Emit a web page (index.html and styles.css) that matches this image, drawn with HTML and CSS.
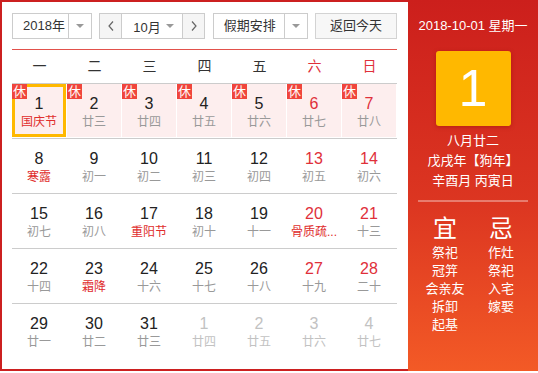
FILE: index.html
```html
<!DOCTYPE html>
<html lang="zh-CN">
<head>
<meta charset="utf-8">
<title>万年历</title>
<link rel="stylesheet" href="styles.css">
</head>
<body>
<div class="calendar">
  <div class="main">
    <div class="toolbar">
      <div class="select year">
        <span class="sel-text">2018年</span>
        <span class="sel-arrow"><i class="caret"></i></span>
      </div>
      <div class="month-group">
        <span class="nav"><svg width="6" height="10" viewBox="0 0 6 10"><polyline points="5,0.5 1,5 5,9.5" fill="none" stroke="#666" stroke-width="1.2"/></svg></span>
        <span class="month"><span>10月</span><i class="caret"></i></span>
        <span class="nav"><svg width="6" height="10" viewBox="0 0 6 10"><polyline points="1,0.5 5,5 1,9.5" fill="none" stroke="#666" stroke-width="1.2"/></svg></span>
      </div>
      <div class="select holiday">
        <span class="sel-text">假期安排</span>
        <span class="sel-arrow"><i class="caret"></i></span>
      </div>
      <div class="today-btn">返回今天</div>
    </div>

    <div class="weekdays">
      <span>一</span><span>二</span><span>三</span><span>四</span><span>五</span><span class="we">六</span><span class="we">日</span>
    </div>

    <div class="weeks">
      <div class="week">
        <div class="day rest current"><i class="badge">休</i><span class="num">1</span><span class="lunar fest">国庆节</span></div>
        <div class="day rest"><i class="badge">休</i><span class="num">2</span><span class="lunar">廿三</span></div>
        <div class="day rest"><i class="badge">休</i><span class="num">3</span><span class="lunar">廿四</span></div>
        <div class="day rest"><i class="badge">休</i><span class="num">4</span><span class="lunar">廿五</span></div>
        <div class="day rest"><i class="badge">休</i><span class="num">5</span><span class="lunar">廿六</span></div>
        <div class="day rest weekend"><i class="badge">休</i><span class="num">6</span><span class="lunar">廿七</span></div>
        <div class="day rest weekend"><i class="badge">休</i><span class="num">7</span><span class="lunar">廿八</span></div>
      </div>
      <div class="week">
        <div class="day"><span class="num">8</span><span class="lunar fest">寒露</span></div>
        <div class="day"><span class="num">9</span><span class="lunar">初一</span></div>
        <div class="day"><span class="num">10</span><span class="lunar">初二</span></div>
        <div class="day"><span class="num">11</span><span class="lunar">初三</span></div>
        <div class="day"><span class="num">12</span><span class="lunar">初四</span></div>
        <div class="day weekend"><span class="num">13</span><span class="lunar">初五</span></div>
        <div class="day weekend"><span class="num">14</span><span class="lunar">初六</span></div>
      </div>
      <div class="week">
        <div class="day"><span class="num">15</span><span class="lunar">初七</span></div>
        <div class="day"><span class="num">16</span><span class="lunar">初八</span></div>
        <div class="day"><span class="num">17</span><span class="lunar fest">重阳节</span></div>
        <div class="day"><span class="num">18</span><span class="lunar">初十</span></div>
        <div class="day"><span class="num">19</span><span class="lunar">十一</span></div>
        <div class="day weekend"><span class="num">20</span><span class="lunar fest">骨质疏...</span></div>
        <div class="day weekend"><span class="num">21</span><span class="lunar">十三</span></div>
      </div>
      <div class="week">
        <div class="day"><span class="num">22</span><span class="lunar">十四</span></div>
        <div class="day"><span class="num">23</span><span class="lunar fest">霜降</span></div>
        <div class="day"><span class="num">24</span><span class="lunar">十六</span></div>
        <div class="day"><span class="num">25</span><span class="lunar">十七</span></div>
        <div class="day"><span class="num">26</span><span class="lunar">十八</span></div>
        <div class="day weekend"><span class="num">27</span><span class="lunar">十九</span></div>
        <div class="day weekend"><span class="num">28</span><span class="lunar">二十</span></div>
      </div>
      <div class="week">
        <div class="day"><span class="num">29</span><span class="lunar">廿一</span></div>
        <div class="day"><span class="num">30</span><span class="lunar">廿二</span></div>
        <div class="day"><span class="num">31</span><span class="lunar">廿三</span></div>
        <div class="day other"><span class="num">1</span><span class="lunar">廿四</span></div>
        <div class="day other"><span class="num">2</span><span class="lunar">廿五</span></div>
        <div class="day other"><span class="num">3</span><span class="lunar">廿六</span></div>
        <div class="day other"><span class="num">4</span><span class="lunar">廿七</span></div>
      </div>
    </div>
  </div>

  <aside class="side">
    <div class="side-date">2018-10-01 星期一</div>
    <div class="big-day">1</div>
    <div class="lunar-info">
      <div>八月廿二</div>
      <div>戊戌年【狗年】</div>
      <div>辛酉月 丙寅日</div>
    </div>
    <div class="divider"></div>
    <div class="yiji">
      <div class="yiji-col">
        <div class="yiji-title">宜</div>
        <ul>
          <li>祭祀</li>
          <li>冠笄</li>
          <li>会亲友</li>
          <li>拆卸</li>
          <li>起基</li>
        </ul>
      </div>
      <div class="yiji-col">
        <div class="yiji-title">忌</div>
        <ul>
          <li>作灶</li>
          <li>祭祀</li>
          <li>入宅</li>
          <li>嫁娶</li>
        </ul>
      </div>
    </div>
  </aside>
</div>
</body>
</html>
```

FILE: styles.css
```css
* { box-sizing: border-box; }

html, body {
  margin: 0;
  padding: 0;
  background: #fff;
}

body {
  font-family: "Liberation Sans", "Noto Sans CJK SC", sans-serif;
  color: #333;
}

.calendar {
  display: flex;
  width: 538px;
  height: 371px;
}

.main {
  width: 408px;
  height: 371px;
  border: 2px solid #cc2020;
  border-right: 0;
  padding: 11px 11px 0 10px;
}

/* toolbar */
.toolbar {
  display: flex;
  justify-content: space-between;
  height: 26px;
  font-size: 13px;
}

.select {
  display: flex;
  height: 26px;
  border: 1px solid #ccc;
  background: #fff;
}

.sel-text {
  line-height: 24px;
  padding-left: 10px;
  white-space: nowrap;
}

.year { width: 80px; }
.year .sel-text { width: 55px; }

.holiday { width: 95px; }
.holiday .sel-text { width: 70px; }

.sel-arrow {
  width: 23px;
  border-left: 1px solid #ccc;
  display: flex;
  align-items: center;
  justify-content: center;
}

.caret {
  display: block;
  width: 0;
  height: 0;
  border-left: 4px solid transparent;
  border-right: 4px solid transparent;
  border-top: 4px solid #999;
}

.month-group {
  display: flex;
  width: 106px;
  height: 26px;
  border: 1px solid #ccc;
}

.nav {
  width: 21px;
  display: flex;
  align-items: center;
  justify-content: center;
  background: #f5f5f5;
}

.month {
  width: 62px;
  border-left: 1px solid #ccc;
  border-right: 1px solid #ccc;
  display: flex;
  align-items: center;
  justify-content: space-between;
  padding: 0 8px 0 11px;
  background: #fff;
}

.today-btn {
  width: 82px;
  height: 26px;
  border: 1px solid #d3d3d3;
  background: #f7f7f7;
  text-align: center;
  line-height: 24px;
}

/* weekday header */
.weekdays {
  display: grid;
  grid-template-columns: repeat(7, 55px);
  margin-top: 10px;
  border-top: 1px solid #e2514b;
  border-bottom: 1px solid #ccc;
  height: 35px;
  line-height: 33px;
  font-size: 14px;
  text-align: center;
}

.weekdays .we { color: #e0303a; }

/* day grid */
.week {
  display: grid;
  grid-template-columns: repeat(7, 55px);
  height: 55px;
  border-bottom: 1px solid #ccc;
}

.week:last-child { border-bottom: 0; }

.day {
  position: relative;
  margin: 0 1px 1px 0;
  text-align: center;
  min-width: 0;
}

.day.rest { background: #fdeeee; }

.day.current { box-shadow: inset 0 0 0 3px #ffb800; }

.badge {
  position: absolute;
  left: 0;
  top: 0;
  width: 15px;
  height: 15px;
  background: #f0453c;
  color: #fff;
  font-style: normal;
  font-size: 13px;
  line-height: 15px;
  text-align: center;
}

.num {
  display: block;
  padding-top: 10px;
  line-height: 20px;
  font-size: 16px;
  color: #222;
}

.lunar {
  display: block;
  line-height: 17px;
  font-size: 12px;
  color: #999;
  white-space: nowrap;
}

.lunar.fest { color: #e02d2d; }
.weekend .num { color: #e0303a; }

.other .num,
.other .lunar { color: #c2c2c2; }

/* side panel */
.side {
  width: 130px;
  height: 371px;
  background: linear-gradient(#cc1f1c, #dc3621 55%, #f35a26);
  color: #fff;
  display: flex;
  flex-direction: column;
  align-items: center;
  padding-top: 16px;
  text-align: center;
}

.side-date {
  font-size: 13px;
  line-height: 20px;
  white-space: nowrap;
}

.big-day {
  width: 75px;
  height: 75px;
  margin-top: 15px;
  background: #ffb800;
  border-radius: 3px;
  box-shadow: 0 1px 4px rgba(120, 0, 0, 0.35);
  font-size: 52px;
  line-height: 75px;
}

.lunar-info {
  margin-top: 5px;
  font-size: 13px;
  line-height: 20px;
  white-space: nowrap;
}

.divider {
  width: 110px;
  height: 2px;
  margin-top: 9px;
  background: rgba(255, 255, 255, 0.35);
}

.yiji {
  display: grid;
  grid-template-columns: 56px 56px;
  margin-top: 12px;
}

.yiji-title {
  font-size: 24px;
  line-height: 30px;
}

.yiji ul {
  list-style: none;
  margin: 0;
  padding: 0;
}

.yiji li {
  font-size: 13px;
  line-height: 18px;
  white-space: nowrap;
}
```
